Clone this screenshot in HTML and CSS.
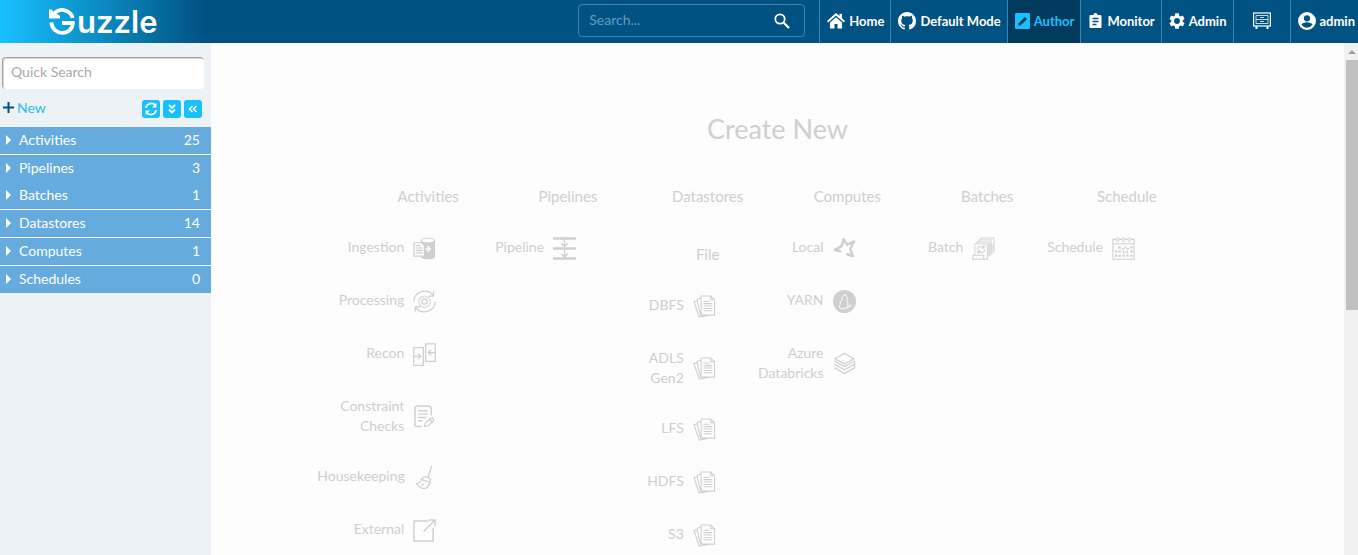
FILE: index.html
```html
<!DOCTYPE html>
<html lang="en">
<head>
<meta charset="utf-8">
<title>Guzzle</title>
<link rel="stylesheet" href="styles.css">
</head>
<body>
<svg class="defs" aria-hidden="true">
  <symbol id="docs" viewBox="0 0 24 24">
    <path d="M8.500 1h10l4 4v16h-14zM18.500 1v4h4M8 3.500 4.500 4.500v3M4.500 6 1 7l5.500 16L16 21.500M4.500 7 8 21" fill="none" stroke="currentColor" stroke-width="1.100"/>
    <path d="M11 6.500h6M11 9h9M11 11.500h9M11 14h9M11 16.500h9" stroke="currentColor" stroke-width="1.100"/>
  </symbol>
</svg>

<header class="topbar">
  <a class="brand" href="#" aria-label="Guzzle">
    <svg class="brand-mark" viewBox="0 0 26 27" fill="none" stroke="currentColor">
      <path d="M5 6.500C8 1.500 13 1.200 17 2.800c4 1.500 6 4 6.500 7.200" stroke-width="3.800"/>
      <path d="M0 1.500h2.500L5 4l6 4v2.500H0z" fill="currentColor" stroke="none"/>
      <path d="M2.300 14.500C3 21 8 24.800 13 24.800c6 0 10.800-4 10.800-9.800H13" stroke-width="3.800"/>
    </svg>
    <span class="brand-text">uzzle</span>
  </a>
  <form class="search">
    <input class="search-input" type="text" placeholder="Search..." aria-label="Search">
    <button class="search-button" type="button" aria-label="Search">
      <svg class="search-icon" viewBox="0 0 16 16" fill="none" stroke="currentColor"><circle cx="6" cy="6" r="4.700" stroke-width="1.800"/><path d="m9.500 9.500 5.500 5.500" stroke-width="2.200"/></svg>
    </button>
  </form>
  <nav class="nav">
    <a class="nav-item" href="#"><svg class="nav-icon" viewBox="0 0 18 18" fill="currentColor"><path d="M9 1 0 9l1.200 1.400L9 3.600l7.800 6.800L18 9l-3-2.700V1.800h-2.500v2.300zM9 5.200 3 10.500V16.500h4.500V12h3v4.500H15v-6z"/></svg><span>Home</span></a>
    <a class="nav-item" href="#"><svg class="nav-icon" viewBox="0 0 16 16" fill="currentColor"><path d="M8 0C3.580 0 0 3.580 0 8c0 3.540 2.290 6.530 5.470 7.590.4.070.55-.17.55-.38 0-.19-.01-.82-.01-1.490-2.010.37-2.530-.49-2.690-.94-.09-.23-.48-.94-.82-1.130-.28-.15-.68-.52-.01-.53.63-.01 1.080.58 1.230.82.72 1.210 1.870.87 2.330.66.070-.52.28-.87.51-1.070-1.780-.2-3.640-.89-3.640-3.950 0-.87.31-1.590.82-2.150-.08-.2-.36-1.020.08-2.120 0 0 .67-.21 2.200.82.64-.18 1.320-.27 2-.27s1.360.09 2 .27c1.530-1.040 2.200-.82 2.200-.82.44 1.100.16 1.920.08 2.120.51.56.82 1.270.82 2.150 0 3.070-1.870 3.750-3.650 3.950.29.25.54.73.54 1.480 0 1.070-.01 1.930-.01 2.200 0 .21.15.46.55.38A8.010 8.010 0 0 0 16 8c0-4.420-3.580-8-8-8z"/></svg><span>Default Mode</span></a>
    <a class="nav-item nav-item-active" href="#" aria-current="page"><svg class="nav-icon nav-icon-small" viewBox="0 0 14 15"><rect width="14" height="15" rx="1" fill="currentColor"/><path d="m3 12 .4-2.400 5.800-5.800 2 2-5.800 5.800z" class="nav-pencil"/></svg><span>Author</span></a>
    <a class="nav-item" href="#"><svg class="nav-icon nav-icon-small" viewBox="0 0 14 16"><path d="M2 2h3a2 2 0 0 1 4 0h3q1 0 1 1v11q0 1-1 1H2q-1 0-1-1V3q0-1 1-1z" fill="currentColor"/><path d="M4 5.500h6M4 8.500h6M4 11.500h4" class="nav-lines"/></svg><span>Monitor</span></a>
    <a class="nav-item" href="#"><svg class="nav-icon nav-icon-gear" viewBox="2 2 20 20" fill="currentColor"><path d="M19.140 12.940c.04-.3.060-.61.060-.94s-.02-.64-.07-.94l2.030-1.580c.18-.14.230-.41.120-.61l-1.920-3.320c-.12-.22-.37-.29-.59-.22l-2.390.96c-.5-.38-1.030-.7-1.620-.94l-.36-2.540A.48.48 0 0 0 13.920 2.400h-3.840c-.24 0-.43.17-.47.41l-.36 2.540c-.59.24-1.130.57-1.620.94l-2.390-.96c-.22-.08-.47 0-.59.22L2.740 8.870c-.12.210-.08.470.12.610l2.030 1.580c-.05.3-.09.63-.09.940s.02.64.07.94l-2.030 1.580c-.18.14-.23.41-.12.610l1.920 3.320c.12.220.37.290.59.220l2.390-.96c.5.380 1.030.7 1.620.94l.36 2.540c.05.240.24.410.48.410h3.840c.24 0 .44-.17.47-.41l.36-2.540c.59-.24 1.130-.56 1.620-.94l2.390.96c.22.080.47 0 .59-.22l1.920-3.320c.12-.22.070-.47-.12-.61zM12 15.600A3.600 3.600 0 1 1 12 8.400a3.600 3.600 0 0 1 0 7.200z"/></svg><span>Admin</span></a>
    <a class="nav-item nav-item-wide" href="#" aria-label="Storage"><svg class="nav-icon" viewBox="0 0 18 18" fill="none" stroke="currentColor"><rect x=".6" y="1" width="16.800" height="13" stroke-width="1.200"/><path d="M3 3.500h12v8H3zM3 7.500h12M7 5.500h4M7 9.500h4" opacity=".75"/><path d="M3.500 14v3M14.500 14v3" stroke-width="2"/></svg></a>
    <a class="nav-item nav-item-user" href="#"><svg class="nav-icon" viewBox="2 2 20 20" fill="currentColor"><path fill-rule="evenodd" d="M12 2a10 10 0 1 0 0 20 10 10 0 0 0 0-20zm0 3.500a3.500 3.500 0 1 1 0 7 3.500 3.500 0 0 1 0-7zm0 14c-2.500 0-4.700-1.300-6-3.200 0-2 4-3 6-3s6 1 6 3a7.200 7.200 0 0 1-6 3.200z"/></svg><span>admin</span></a>
  </nav>
</header>

<div class="workspace">
  <aside class="sidebar">
    <input class="quick-search" type="text" placeholder="Quick Search" aria-label="Quick Search">
    <div class="tools">
      <button class="new-button" type="button"><svg class="plus-icon" viewBox="0 0 11 11"><path d="M5.500 0v11M0 5.500h11" stroke="currentColor" stroke-width="2"/></svg><span>New</span></button>
      <button class="tool" type="button" aria-label="Refresh"><svg class="tool-icon" viewBox="0 0 18 18" fill="none" stroke="currentColor" stroke-width="1.800"><path d="M4 8c.5-5 7-6 9.500-2.500M14 10c-.5 5-7 6-9.500 2.500"/><path d="M14.500 3v4.500H10zM3.500 15v-4.500H8z" fill="currentColor" stroke="none"/></svg></button>
      <button class="tool" type="button" aria-label="Expand all"><svg class="tool-icon" viewBox="0 0 18 18" fill="none" stroke="currentColor" stroke-width="1.800"><path d="m6 5 3 3 3-3M6 9.500l3 3 3-3"/></svg></button>
      <button class="tool" type="button" aria-label="Collapse"><svg class="tool-icon" viewBox="0 0 18 18" fill="none" stroke="currentColor" stroke-width="1.600"><path d="M8.500 6 5.500 9l3 3M12.500 6l-3 3 3 3"/></svg></button>
    </div>
    <ul class="tree">
      <li class="tree-row"><i class="caret"></i><span class="tree-name">Activities</span><span>25</span></li>
      <li class="tree-row tree-row-joined"><i class="caret"></i><span class="tree-name">Pipelines</span><span>3</span></li>
      <li class="tree-row"><i class="caret"></i><span class="tree-name">Batches</span><span>1</span></li>
      <li class="tree-row"><i class="caret"></i><span class="tree-name">Datastores</span><span>14</span></li>
      <li class="tree-row"><i class="caret"></i><span class="tree-name">Computes</span><span>1</span></li>
      <li class="tree-row"><i class="caret"></i><span class="tree-name">Schedules</span><span>0</span></li>
    </ul>
  </aside>

  <main class="main">
    <h1 class="title">Create New</h1>
    <div class="columns">
      <section class="column">
        <h2 class="column-title">Activities</h2>
        <a class="item" href="#"><span class="label">Ingestion</span><svg class="icon" viewBox="0 0 24 24"><path d="M8 3.500C8 -.2 23 -.2 23 3.500v17c0 3.700-15 3.700-15 0z" fill="currentColor"/><ellipse cx="15.500" cy="3.500" rx="6.500" ry="2" class="paper"/><path d="M1 6h8l3 3v11H1z" class="paper" stroke="currentColor" stroke-width="1.300"/><path d="M3 9h5M3 11.500h7M3 14h7M3 16.500h7" stroke="currentColor" stroke-width="1.200"/><path d="M13 12.500h4M15 9.500l3 3-3 3" fill="none" stroke="#fdfdfd" stroke-width="1.500"/></svg></a>
        <a class="item" href="#"><span class="label">Processing</span><svg class="icon line" viewBox="0 0 24 24"><path d="M.8 12C1 2 14-3 21 5.500M23.200 12C23 22 10 27 3 18.500M21.500 1.500v4.800h-5M2.500 22.500v-4.800h5"/><circle cx="12" cy="12" r="2.700"/><path d="m12 6 1.500 1.500 2-.6.7 2 2 .8-.7 2 1 1.500-1.700 1.300.1 2-2.100.4-1.300 1.600-1.500-1-1.500 1-1.300-1.600-2.100-.4.100-2-1.700-1.300 1-1.500-.7-2 2-.8.700-2 2 .6z" stroke-width="1"/></svg></a>
        <a class="item" href="#"><span class="label">Recon</span><svg class="icon line" viewBox="0 0 24 24"><path d="M.8 4.800h10v18.500H.8zM13.200.8h10v18.500h-10z"/><path d="M1 14h7M5 11l3 3-3 3M23 10h-7M19 7l-3 3 3 3"/></svg></a>
        <a class="item" href="#"><span class="label">Constraint<br>Checks</span><svg class="icon line" viewBox="0 0 24 24"><path d="M9 22.500H5q-3 0-3-3V4q0-3 3-3h11q3 0 3 3v7M5.500 6h10M5.500 9.500h10M5.500 13H14M5.500 16.500H10" stroke-width="1.500"/><path d="m12 22.500 1-4 6-5q3 0 2.500 3l-5.500 5.200zM17.500 15l2.500 2.500"/></svg></a>
        <a class="item" href="#"><span class="label">Housekeeping</span><svg class="icon line" viewBox="0 0 24 24"><path d="m19.500 0-4 12.500M11 11.500q4-1 7.500 2.500l-.5 3-9.500-3zM8.500 14q-1 4-4.500 4.500 3 5 8.500 5 4-1.500 5.500-6.500M9 20.500l2-2"/></svg></a>
        <a class="item" href="#"><span class="label">External</span><svg class="icon line" viewBox="0 0 24 24"><path d="M16 2H1v21h20V9M11 13 23 1M16.500 1H23v6.500" stroke-width="1.500"/></svg></a>
      </section>
      <section class="column">
        <h2 class="column-title">Pipelines</h2>
        <a class="item" href="#"><span class="label">Pipeline</span><svg class="icon line" viewBox="0 0 24 24"><path d="M0 1.500h24M0 12h24M0 22.500h24" stroke-width="2.700"/><path d="M12 2v8M8.500 6.500 12 10l3.500-3.500M12 13v8M8.500 17.500 12 21l3.500-3.500" stroke-width="1.400"/></svg></a>
      </section>
      <section class="column">
        <h2 class="column-title">Datastores</h2>
        <h3 class="group-title">File</h3>
        <a class="item" href="#"><span class="label">DBFS</span><svg class="icon"><use href="#docs"/></svg></a>
        <a class="item" href="#"><span class="label">ADLS<br>Gen2</span><svg class="icon"><use href="#docs"/></svg></a>
        <a class="item" href="#"><span class="label">LFS</span><svg class="icon"><use href="#docs"/></svg></a>
        <a class="item" href="#"><span class="label">HDFS</span><svg class="icon"><use href="#docs"/></svg></a>
        <a class="item" href="#"><span class="label">S3</span><svg class="icon"><use href="#docs"/></svg></a>
      </section>
      <section class="column">
        <h2 class="column-title">Computes</h2>
        <a class="item" href="#"><span class="label">Local</span><svg class="icon line" viewBox="0 0 24 24"><path d="M7.500 14.800 2 13.500 9 9.500 11 2.500l4 5.500 7-3.500-4 7.500 2.500 8-5.500-2" stroke-width="2.600" stroke-linejoin="round" stroke-linecap="round"/></svg></a>
        <a class="item" href="#"><span class="label">YARN</span><svg class="icon" viewBox="0 0 24 24"><circle cx="12" cy="12" r="12" fill="currentColor"/><path d="M8.500 19.500q-3-1-1-5 0-3 2-4-1-3 1.500-4 1-3 2.500-1 2.500 3 1 6 2 3 .5 5.500 2 0 4-1.500 0 2-4.500 3-3 1.500-6 1z" fill="none" stroke="#fdfdfd" stroke-width="1"/></svg></a>
        <a class="item" href="#"><span class="label">Azure<br>Databricks</span><svg class="icon line" viewBox="0 0 24 24"><path d="m12 1.500 10 5.500-10 5.500L2 7zM1.500 9.500 12 15.200 22.500 9.500v3.200L12 18.500 1.500 12.700M1.500 16.500 12 22.500l10.500-6v-3.500" stroke-width="1.200"/></svg></a>
      </section>
      <section class="column">
        <h2 class="column-title">Batches</h2>
        <a class="item" href="#"><span class="label">Batch</span><svg class="icon line" viewBox="0 0 24 24"><path d="M16 7h7v9l-3 3-4 3z" class="shade"/><path d="M3 18.500V7h13v12.500M5 6.500V5h13v14M7 4.500V3h13v14.500M9 2.500V1h14v14.500" stroke-width=".9"/><path d="M.8 19h11.500v4.200H16V19M.8 19v4.200h12.500" stroke-width="1.100"/><path d="M5.500 13a4 4 0 0 1 7-2M13.500 13a4 4 0 0 1-7 2M12.700 8.500v3H10M6.300 17.500v-3H9" stroke-width="1.100"/></svg></a>
      </section>
      <section class="column">
        <h2 class="column-title">Schedule</h2>
        <a class="item" href="#"><span class="label">Schedule</span><svg class="icon line" viewBox="0 0 24 24"><path d="M4 2.500H1v20.700h22V2.500h-3M7.500 2.500h3M13.500 2.500h3M1 7h22" stroke-width="1.100"/><rect x="4.500" y=".6" width="2.500" height="4" rx="1.200" stroke-width="1"/><rect x="10.800" y=".6" width="2.500" height="4" rx="1.200" stroke-width="1"/><rect x="17" y=".6" width="2.500" height="4" rx="1.200" stroke-width="1"/><path d="m14 9.500 1.100 2.500 2.700.3-2 1.800.6 2.700-2.400-1.400-2.400 1.400.6-2.700-2-1.800 2.700-.3z" stroke-width="1"/><path d="M6.500 11h2.500M19 11h2.500M3 15.200h2.500M6.800 15.200h2.500M19 15.200h2.500M3 19.500h2.500M6.800 19.500h2.500M10.800 19.500h2.500M14.800 19.500h2.500M19 19.500h2.500" stroke-width="2.200"/></svg></a>
      </section>
    </div>
  </main>
  <div class="scrollbar" aria-hidden="true"><i class="scroll-arrow"></i><div class="scroll-thumb"></div></div>
</div>
</body>
</html>
```
FILE: styles.css
```css
* { box-sizing: border-box; }

body {
  margin: 0;
  height: 100vh;
  display: flex;
  flex-direction: column;
  overflow: hidden;
  font-family: Lato, "Liberation Sans", sans-serif;
  font-size: 14px;
  background: #fdfdfd;
}

a { color: inherit; text-decoration: none; }
button { font: inherit; border: 0; padding: 0; cursor: pointer; }
.defs { display: none; }

.topbar {
  display: flex;
  flex: none;
  height: 43px;
  background: #005282;
  color: #fff;
}
.brand {
  display: flex;
  align-items: center;
  width: 211px;
  padding-left: 49px;
  gap: 2px;
  background: linear-gradient(90deg, #17c1ff 0, #005282 205px);
}
.brand-mark { width: 26px; height: 27px; }
.brand-text {
  font-family: Inter, sans-serif;
  font-size: 31px;
  font-weight: 600;
  line-height: 40px;
}

.search {
  display: flex;
  align-items: center;
  width: 227px;
  height: 33px;
  margin: 4px 14px 0 auto;
  border: 1px solid #3489b8;
  border-radius: 4px;
}
.search-input {
  flex: 1;
  min-width: 0;
  padding: 0 10px 2px;
  border: 0;
  background: none;
  color: #fff;
  font: inherit;
}
.search-input::placeholder { color: #5f9cc0; opacity: 1; }
.search-button { display: flex; margin-right: 14px; background: none; color: #fff; }
.search-icon { width: 16px; height: 16px; }

.nav { display: flex; font-size: 13px; font-weight: 700; line-height: 16px; }
.nav-item {
  display: flex;
  align-items: center;
  gap: 4px;
  padding: 0 6px 2px 7px;
  border-left: 1px solid #3489b8;
  white-space: nowrap;
}
.nav-item-active { background: #003a5c; color: #17c1ff; }
.nav-item-wide { padding: 0 19px 2px; }
.nav-item-user { padding-right: 3px; }
.nav-icon { width: 18px; height: 18px; }
.nav-icon-small { width: 15px; height: 16px; }
.nav-icon-gear { width: 16px; height: 16px; }
.nav-pencil { fill: #003a5c; }
.nav-lines { stroke: #005282; stroke-width: 1.5; }

.workspace { display: flex; flex: 1; min-height: 0; }

.sidebar { flex: none; width: 211px; background: #edf2f7; }
.quick-search {
  display: block;
  width: 202px;
  height: 32px;
  margin: 14px 0 0 2px;
  padding: 0 8px 4px;
  border: 0 solid #a3a3a3;
  border-width: 1px 0 0 1px;
  border-radius: 4px;
  background: #fff;
  box-shadow: inset 1px 1px 0 #d6d6d6;
  font: inherit;
}
.quick-search::placeholder { color: #aaa; opacity: 1; }
.tools {
  display: flex;
  align-items: center;
  gap: 3px;
  height: 38px;
  padding: 2px 9px 0 3px;
}
.new-button {
  display: flex;
  align-items: center;
  gap: 3px;
  margin-right: auto;
  padding-bottom: 3px;
  background: none;
  color: #2cbcf2;
}
.plus-icon { width: 11px; height: 11px; color: #005282; }
.tool {
  display: flex;
  width: 18px;
  height: 18px;
  border-radius: 3px;
  background: #17c1ff;
  color: #fff;
}
.tool-icon { width: 18px; height: 18px; }

.tree { margin: 0; padding: 0; list-style: none; }
.tree-row {
  display: flex;
  align-items: center;
  padding: 0 11px 2px 6px;
  line-height: 25px;
  border-bottom: 1px solid #fff;
  background: #65abdd;
  color: #fff;
}
.tree-row-joined, .tree-row:last-child { border-bottom: 0; }
.tree-name { flex: 1; }
.caret {
  margin-right: 8px;
  border-left: 5px solid #fff;
  border-top: 5px solid transparent;
  border-bottom: 5px solid transparent;
}

.main { flex: 1; min-width: 0; padding-top: 66px; color: #cfcfcf; }
.title {
  margin: 0;
  font-size: 27px;
  font-weight: 400;
  line-height: 40px;
  text-align: center;
}
.columns {
  display: grid;
  grid-template-columns: repeat(6, 1fr);
  width: 74%;
  margin: 37px auto 0;
}
.column { display: flex; flex-direction: column; }
.column-title, .group-title {
  margin: 0;
  font-size: 15px;
  font-weight: 400;
  line-height: 20px;
  text-align: center;
}
.column-title { margin-bottom: 31px; }
.group-title { margin: 7px 0 31px; }
.item {
  display: flex;
  align-items: center;
  gap: 9px;
  margin: 0 0 30px -41px;
  line-height: 20px;
}
.label { align-self: flex-start; width: 87px; text-align: right; }
.icon { flex: none; width: 23px; height: 23px; }
.line { fill: none; stroke: currentColor; stroke-width: 1.3; }
.paper { fill: #fdfdfd; }
.shade { fill: #e8e8e8; stroke: none; }

.scrollbar { flex: none; width: 14px; padding-left: 2px; background: #f1f1f1; }
.scroll-arrow {
  display: block;
  width: 8px;
  margin: 7px 2px 6px;
  border: 4px solid transparent;
  border-top: 0;
  border-bottom-color: #a0a0a0;
}
.scroll-thumb { height: 250px; background: #c1c1c1; }
```
